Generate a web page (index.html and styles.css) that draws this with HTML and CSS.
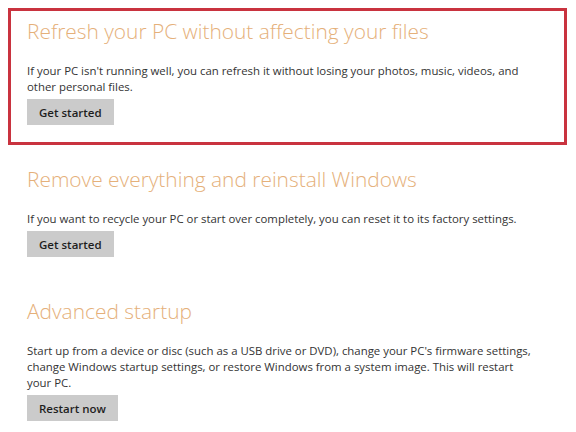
FILE: index.html
```html
<!DOCTYPE html>
<html lang="en">
<head>
<meta charset="utf-8">
<title>Recovery options</title>
<link rel="stylesheet" href="styles.css">
</head>
<body>
<main class="page">
  <section class="option option--selected">
    <h2 class="option__title">Refresh your PC without affecting your files</h2>
    <p class="option__text">If your PC isn't running well, you can refresh it without losing your photos, music, videos, and other personal files.</p>
    <button class="option__btn" type="button">Get started</button>
  </section>
  <section class="option">
    <h2 class="option__title">Remove everything and reinstall Windows</h2>
    <p class="option__text">If you want to recycle your PC or start over completely, you can reset it to its factory settings.</p>
    <button class="option__btn" type="button">Get started</button>
  </section>
  <section class="option">
    <h2 class="option__title">Advanced startup</h2>
    <p class="option__text">Start up from a device or disc (such as a USB drive or DVD), change your PC's firmware settings, change Windows startup settings, or restore Windows from a system image. This will restart your PC.</p>
    <button class="option__btn" type="button">Restart now</button>
  </section>
</main>
</body>
</html>
```

FILE: styles.css
```css
html, body {
  margin: 0;
  padding: 0;
  background: #ffffff;
}

.page {
  display: flex;
  flex-direction: column;
  gap: 11px;
  padding: 8px 9px 0 8px;
  font-family: "Open Sans", "Noto Sans", sans-serif;
}

.option {
  border: 3px solid transparent;
  padding: 7px 16px 17px 16px;
}

.option--selected {
  border-color: #c9333f;
}

.option__title {
  margin: 0;
  font-size: 20.9px;
  line-height: 26px;
  font-weight: 300;
  color: #e5b07a;
}

.option__text {
  margin: 19px 0 4px 0;
  font-size: 11.4px;
  line-height: 16px;
  color: #333333;
  max-width: 512px;
}

.option__btn {
  display: block;
  height: 26px;
  padding: 0 12px;
  border: none;
  background: #cbcbcb;
  color: #1e1e1e;
  font-family: "Open Sans", "Noto Sans", sans-serif;
  font-size: 11.5px;
  font-weight: 600;
}
```
